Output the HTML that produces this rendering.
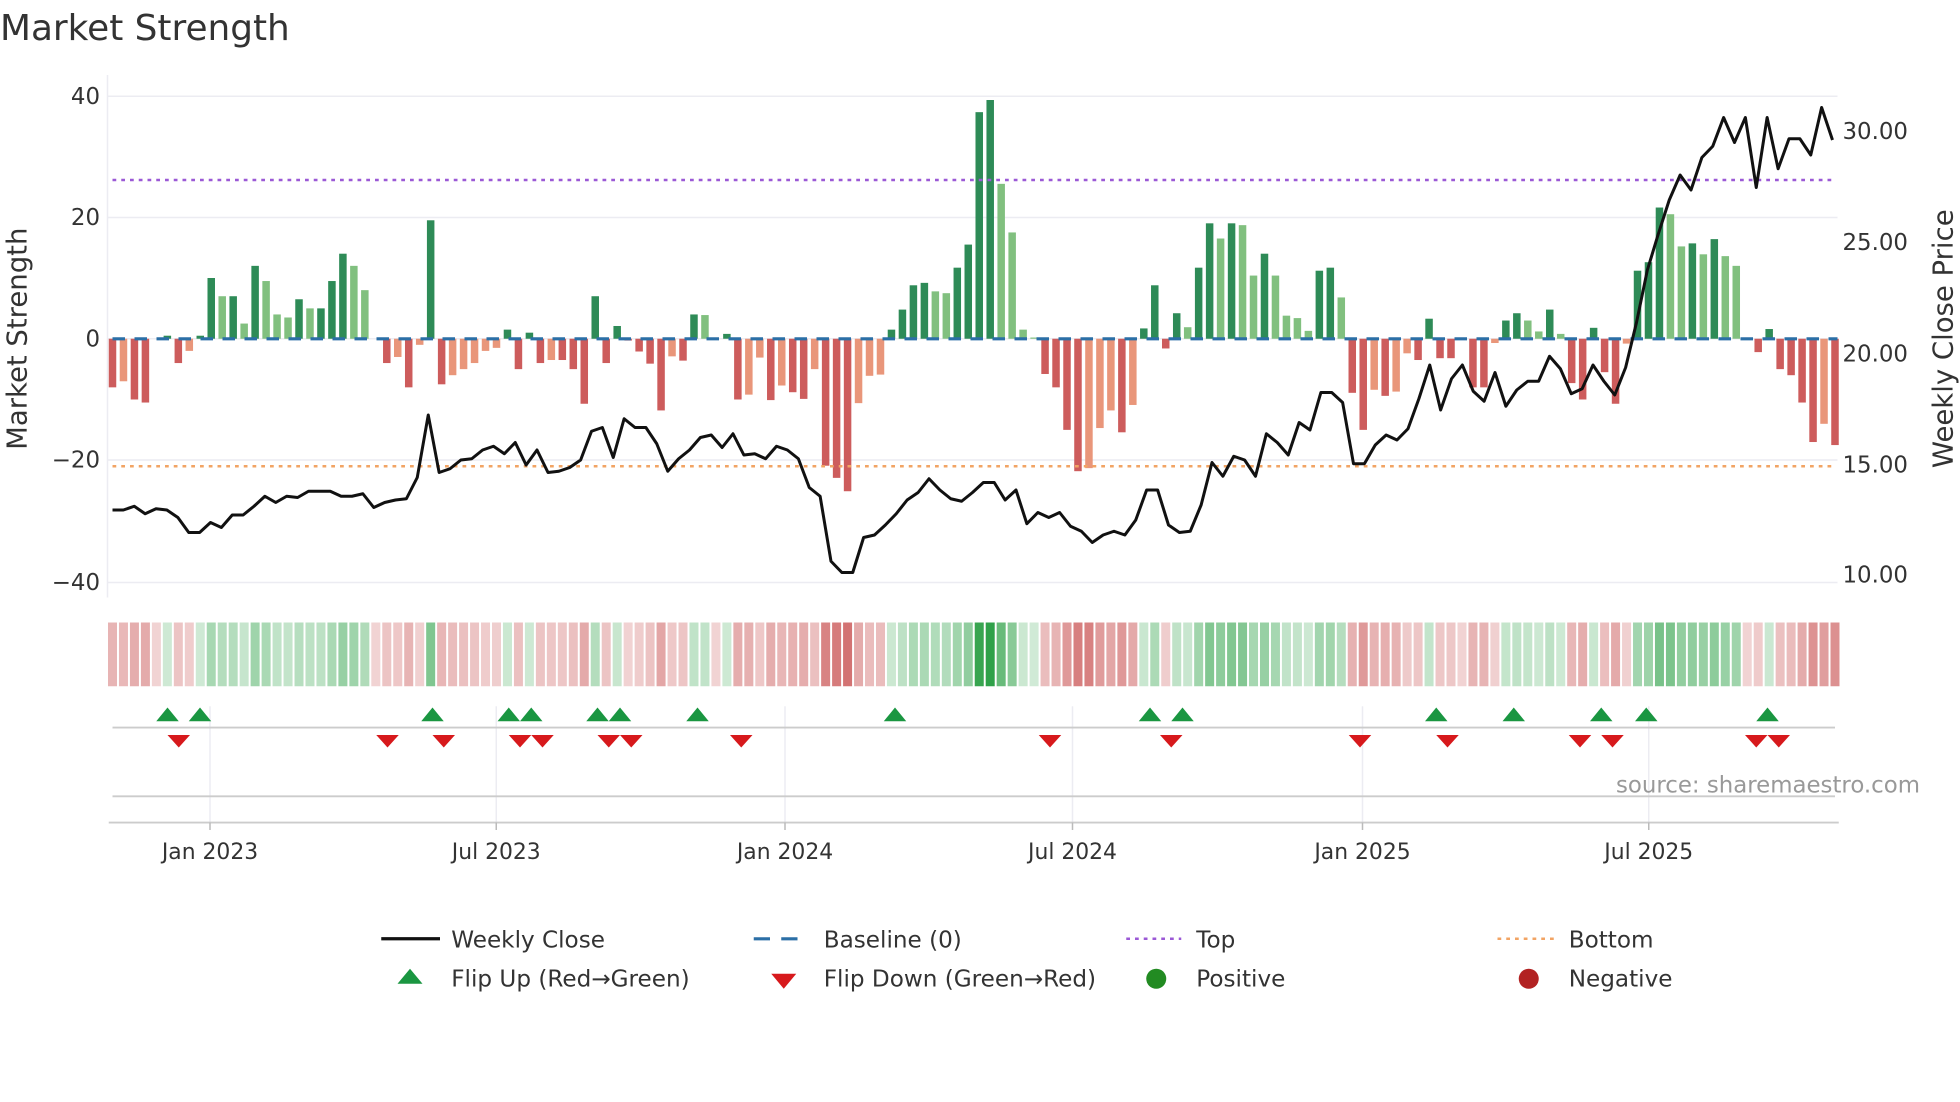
<!DOCTYPE html>
<html><head><meta charset="utf-8"><style>
html,body{margin:0;padding:0;background:#fff;width:1960px;height:1102px;overflow:hidden}
svg{display:block}
text{font-family:"DejaVu Sans","Liberation Sans",sans-serif;fill:#333}
</style></head><body>
<svg id="s" width="1960" height="1102" viewBox="0 0 1568 881.6" xmlns="http://www.w3.org/2000/svg">
<rect width="1568" height="882" fill="#fff"/>
<text x="0" y="32" font-size="28.7">Market Strength</text>
<g stroke="#ececf2" stroke-width="1.2">
<line x1="86" y1="77" x2="1470" y2="77"/>
<line x1="86" y1="174" x2="1470" y2="174"/>
<line x1="86" y1="271" x2="1470" y2="271"/>
<line x1="86" y1="368" x2="1470" y2="368"/>
<line x1="86" y1="466" x2="1470" y2="466"/>
<line x1="86" y1="60" x2="86" y2="478"/>
</g>
<g font-size="18.3" text-anchor="end">
<text x="80" y="83">40</text><text x="80" y="180">20</text><text x="80" y="277">0</text>
<text x="80" y="374">−20</text><text x="80" y="472">−40</text>
</g>
<g font-size="18.3">
<text x="1474" y="111">30.00</text><text x="1474" y="200">25.00</text><text x="1474" y="289">20.00</text>
<text x="1474" y="378">15.00</text><text x="1474" y="466">10.00</text>
</g>
<text font-size="22" transform="translate(21,271) rotate(-90)" text-anchor="middle">Market Strength</text>
<text font-size="22" transform="translate(1562,271) rotate(-90)" text-anchor="middle">Weekly Close Price</text>
<g id="bars"></g>
<line x1="90" y1="271" x2="1470" y2="271" stroke="#2b6fa6" stroke-width="2.5" stroke-dasharray="10 7.6"/>
<line x1="90" y1="144" x2="1468" y2="144" stroke="#9b59d6" stroke-width="2" stroke-dasharray="3 4"/>
<line x1="90" y1="373" x2="1468" y2="373" stroke="#f2a464" stroke-width="2" stroke-dasharray="3 4"/>
<polyline id="price" fill="none" stroke="#111" stroke-width="2.4" stroke-linejoin="round"/>
<g id="heat"></g>
<g stroke="#ececf2" stroke-width="1.2">
<line x1="168" y1="565" x2="168" y2="658"/><line x1="397" y1="565" x2="397" y2="658"/>
<line x1="628" y1="565" x2="628" y2="658"/><line x1="858" y1="565" x2="858" y2="658"/>
<line x1="1090" y1="565" x2="1090" y2="658"/><line x1="1319" y1="565" x2="1319" y2="658"/>
</g>
<line x1="90" y1="582" x2="1468" y2="582" stroke="#ccc" stroke-width="1.5"/>
<line x1="90" y1="637" x2="1468" y2="637" stroke="#ccc" stroke-width="1.5"/>
<line x1="87" y1="658" x2="1471" y2="658" stroke="#ccc" stroke-width="1.5"/>
<g stroke="#bbb" stroke-width="1.2">
<line x1="168" y1="658" x2="168" y2="664"/><line x1="397" y1="658" x2="397" y2="664"/>
<line x1="628" y1="658" x2="628" y2="664"/><line x1="858" y1="658" x2="858" y2="664"/>
<line x1="1090" y1="658" x2="1090" y2="664"/><line x1="1319" y1="658" x2="1319" y2="664"/>
</g>
<g id="flips"></g>
<text x="1536" y="634" font-size="18.3" text-anchor="end" style="fill:#999">source: sharemaestro.com</text>
<g font-size="17.5" text-anchor="middle">
<text x="168" y="687">Jan 2023</text><text x="397" y="687">Jul 2023</text><text x="628" y="687">Jan 2024</text>
<text x="858" y="687">Jul 2024</text><text x="1090" y="687">Jan 2025</text><text x="1319" y="687">Jul 2025</text>
</g>
<g font-size="18.5">
<line x1="305" y1="751" x2="352" y2="751" stroke="#111" stroke-width="2.6"/>
<text x="361" y="758">Weekly Close</text>
<line x1="603" y1="751" x2="647" y2="751" stroke="#2b6fa6" stroke-width="2.5" stroke-dasharray="13 9"/>
<text x="659" y="758">Baseline (0)</text>
<line x1="901" y1="751" x2="945" y2="751" stroke="#9b59d6" stroke-width="2" stroke-dasharray="3 4"/>
<text x="957" y="758">Top</text>
<line x1="1198" y1="751" x2="1243" y2="751" stroke="#f2a464" stroke-width="2" stroke-dasharray="3 4"/>
<text x="1255" y="758">Bottom</text>
<polygon points="328,775 338,787 318,787" fill="#1a9641"/>
<text x="361" y="789">Flip Up (Red→Green)</text>
<polygon points="617,779 637,779 627,791" fill="#d7191c"/>
<text x="659" y="789">Flip Down (Green→Red)</text>
<circle cx="925" cy="783" r="8" fill="#228b22"/>
<text x="957" y="789">Positive</text>
<circle cx="1223" cy="783" r="8" fill="#b22222"/>
<text x="1255" y="789">Negative</text>
</g>
</svg>
<script>
var V=[-8,-7,-10,-10.5,0,0.5,-4,-2,0.5,10,7,7,2.5,12,9.5,4,3.5,6.5,5,5,9.5,14,12,8,0,-4,-3,-8,-1,19.5,-7.5,-6,-5,-4,-2,-1.5,1.5,-5,1,-4,-3.5,-3.5,-5,
-10.7,7,-4,2.1,-0.3,-2.1,-4.1,-11.8,-2.9,-3.6,4,3.9,0,0.8,-10,-9.2,-3.1,-10.1,-7.7,-8.8,-9.9,-5,-20.9,-22.9,-25.1,-10.6,-6.1,-5.9,1.5,4.8,8.8,9.2,7.8,7.5,11.7,15.5,37.3,39.3,25.5,17.5,1.5,0.2,
-5.8,-8,-15,-21.8,-21.3,-14.7,-11.8,-15.4,-10.9,1.7,8.8,-1.6,4.2,1.9,11.7,19,16.5,19,18.7,10.4,14,10.4,3.8,3.4,1.3,11.2,11.7,6.8,-8.9,-15,-8.4,-9.4,-8.7,-2.4,-3.5,3.3,-3.2,-3.2,0,-8,-8,-0.7,3,4.2,3,1.2,4.8,0.8,-7.3,-10,1.8,-5.5,-10.7,-0.8,11.2,12.6,21.6,20.5,15.2,15.7,13.9,16.4,13.6,12,0,-2.2,1.6,-5,-6,-10.5,-17,-14,-17.5];
var P=[408,408,405,411,407,408,414,426,426,418,422,412,412,405,397,402,397,398,393,393,393,397,397,395,406,402,400,399,382,332,378,375,368,367,360,357,363,354,372,360,378,377,374,368,345,342,366,335,342,342,355,377,367,360,350,348,358,347,364,363,367,357,360,367,390,397,449,458,458,430,428,420,411,400,394,383,392,399,401,394,386,386,400,392,419,410,414,410,421,425,434,428,425,428,416,392,392,420,426,425,404,370,381,365,368,381,347,354,364,338,344,314,314,322,371,371,356,348,352,343,319,292,328,303,292,313,321,298,325,312,305,305,285,295,315,311,292,305,316,294,258,216,187,160,140,152,126,117,94,114,94,150,94,135,111,111,124,86,112];
var NS="http://www.w3.org/2000/svg";
function el(t,a,p){var e=document.createElementNS(NS,t);for(var k in a)e.setAttribute(k,a[k]);p.appendChild(e);return e;}
var bars=document.getElementById('bars'),heat=document.getElementById('heat');
var n=V.length,step=(1468-90)/(n-1);
for(var i=0;i<n;i++){
 var v=V[i],pv=i?V[i-1]:0,x=90+i*step,c;
 if(v>0)c=(v>=pv)?'#2e8b57':'#81c07f';else c=(v<=pv)?'#cd5c5c':'#e9967a';
 var h=Math.abs(v)*4.86;
 if(h>0.3)el('rect',{x:x-3,y:v>0?271-h:271,width:6,height:h,fill:c},bars);
 var f;
 if(v>0){var a=0.22+0.78*Math.min(v/40,1);f='rgba(44,160,70,'+a.toFixed(3)+')';}
 else{var a2=0.25+0.55*Math.min(-v/25,1);f='rgba(200,80,80,'+a2.toFixed(3)+')';}
 el('rect',{x:x-3.6,y:498,width:7.2,height:51,fill:f},heat);
}
var pts=[],m=P.length;
for(var j=0;j<m;j++){pts.push((90+j*(1466-90)/(m-1)).toFixed(1)+','+P[j]);}
document.getElementById('price').setAttribute('points',pts.join(' '));
var fl=document.getElementById('flips');
[134,160,346,407,425,478,496,558,716,920,946,1149,1211,1281,1317,1414].forEach(function(x){el('polygon',{points:x+',566 '+(x+9)+',577 '+(x-9)+',577',fill:'#1a9641'},fl);});
[143,310,355,416,434,487,505,593,840,937,1088,1158,1264,1290,1405,1423].forEach(function(x){el('polygon',{points:(x-9)+',588 '+(x+9)+',588 '+x+',598',fill:'#d7191c'},fl);});
</script>
</body></html>
